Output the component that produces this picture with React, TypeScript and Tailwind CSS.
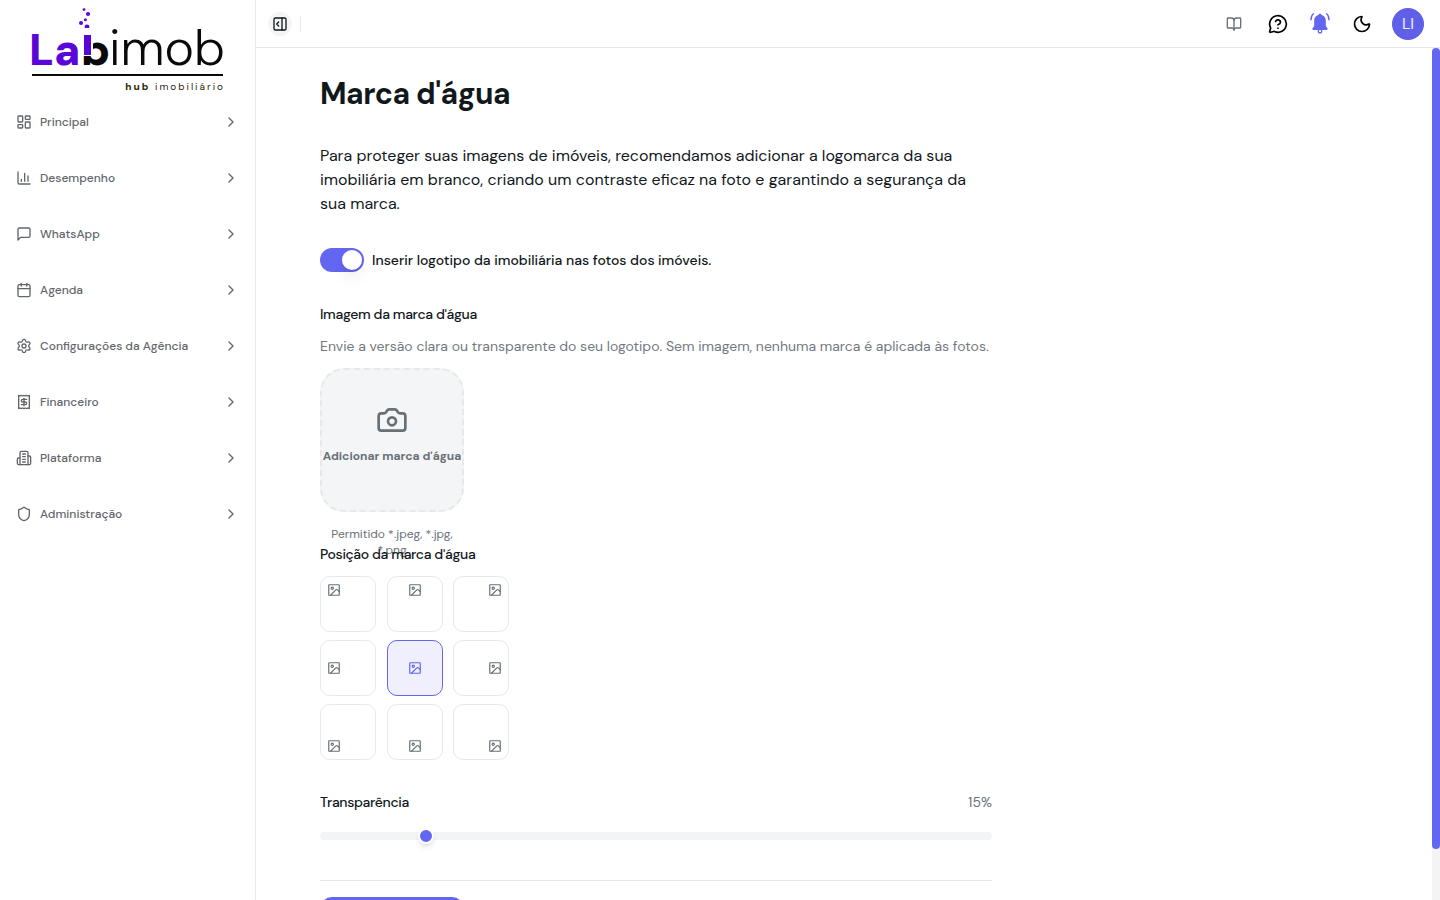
import { useState } from "react";
import {
  BookOpen,
  Calendar,
  Camera,
  ChevronRight,
  LayoutDashboard,
  MessageCircleQuestionMark,
  Moon,
  PanelRightOpen,
  Receipt,
  Settings,
  Shield,
  type LucideIcon,
} from "lucide-react";
import { clsx } from "clsx";

const ChartIcon = () => (
  <svg viewBox="0 0 24 24" className="size-4" fill="none" stroke="currentColor" strokeWidth="2" strokeLinecap="round" strokeLinejoin="round">
    <path d="M3 3v16a2 2 0 0 0 2 2h16M18 17V9M13 17V5M8 17v-3" />
  </svg>
);

const MessageIcon = () => (
  <svg viewBox="0 0 24 24" className="size-4" fill="none" stroke="currentColor" strokeWidth="2" strokeLinecap="round" strokeLinejoin="round">
    <path d="M21 15a2 2 0 0 1-2 2H7l-4 4V5a2 2 0 0 1 2-2h14a2 2 0 0 1 2 2z" />
  </svg>
);

const BuildingIcon = () => (
  <svg viewBox="0 0 24 24" className="size-4" fill="none" stroke="currentColor" strokeWidth="2" strokeLinecap="round" strokeLinejoin="round">
    <path d="M6 22V4a2 2 0 0 1 2-2h8a2 2 0 0 1 2 2v18Z" />
    <path d="M6 12H4a2 2 0 0 0-2 2v6a2 2 0 0 0 2 2h2M18 9h2a2 2 0 0 1 2 2v9a2 2 0 0 1-2 2h-2" />
    <path d="M10 6h4M10 10h4M10 14h4M10 18h4" />
  </svg>
);

const PictureIcon = () => (
  <svg viewBox="0 0 24 24" className="size-3.5" fill="none" stroke="currentColor" strokeWidth="2" strokeLinecap="round" strokeLinejoin="round">
    <rect x="3" y="3" width="18" height="18" rx="1" />
    <circle cx="9" cy="9" r="2" />
    <path d="m21 15-3.1-3.1a2 2 0 0 0-2.8 0L6 21" />
  </svg>
);

const BellIcon = () => (
  <svg viewBox="0 0 24 24" className="size-6" fill="none">
    <path
      fill="currentColor"
      d="M12 1.8c.8 0 1.4.5 1.6 1.3 2.6.7 4.2 2.8 4.2 5.4v4.2c0 1.5.5 2.4 1.5 3.3.7.7.3 2-.8 2h-13c-1.1 0-1.5-1.3-.8-2 1-.9 1.5-1.8 1.5-3.3V8.5c0-2.6 1.6-4.7 4.2-5.4.2-.8.8-1.3 1.6-1.3z"
    />
    <circle cx="12" cy="19.2" r="1.8" fill="white" stroke="currentColor" strokeWidth="1.3" />
    <path d="M5.4 1.8C3.8 3 3 5 3 7.8M18.6 1.8C20.2 3 21 5 21 7.8" stroke="currentColor" strokeWidth="1.4" strokeLinecap="round" />
  </svg>
);

const Logo = () => (
  <svg viewBox="0 0 192 86" className="h-[86px] w-48 overflow-visible" role="img" aria-label="Labimob hub imobiliário">
    <g fill="#5b06d8">
      <circle cx="52" cy="1.6" r="1.4" />
      <circle cx="56" cy="6" r="2.1" />
      <circle cx="53.4" cy="11.8" r="1.5" />
      <circle cx="49" cy="15" r="2" />
      <circle cx="55" cy="19" r="2.4" />
    </g>
    <text x="-3" y="57" fill="#5b06d8" fontSize="44" fontWeight="900" fontFamily="DM Sans, sans-serif">La</text>
    <text x="49" y="57" fill="#0a0a0a" fontSize="44" fontWeight="900" fontFamily="DM Sans, sans-serif">b</text>
    <rect x="50" y="20" width="11" height="28" fill="white" />
    <rect x="52" y="27" width="7" height="20" fill="#5b06d8" />
    <text x="77" y="57" fill="#0a0a0a" fontSize="50" fontWeight="300" fontFamily="DM Sans, sans-serif">imob</text>
    <rect y="66" width="191" height="2" fill="#0a0a0a" />
    <text x="193" y="82" textAnchor="end" fill="#27270f" fontSize="10" letterSpacing="2" fontFamily="DM Sans, sans-serif">
      <tspan fontWeight="800">hub</tspan> imobiliário
    </text>
  </svg>
);

const menu: { label: string; icon: LucideIcon | (() => React.ReactElement) }[] = [
  { label: "Principal", icon: LayoutDashboard },
  { label: "Desempenho", icon: ChartIcon },
  { label: "WhatsApp", icon: MessageIcon },
  { label: "Agenda", icon: Calendar },
  { label: "Configurações da Agência", icon: Settings },
  { label: "Financeiro", icon: Receipt },
  { label: "Plataforma", icon: BuildingIcon },
  { label: "Administração", icon: Shield },
];

const Sidebar = () => (
  <aside className="w-64 shrink-0 border-r border-[#e6e8eb]">
    <div className="px-8 pt-2">
      <Logo />
    </div>
    <nav className="mt-2 flex flex-col gap-4 px-4">
      {menu.map(({ label, icon: Icon }) => (
        <button key={label} type="button" className="flex h-10 w-full items-center gap-2 text-xs font-medium text-[#62666b]">
          <Icon className="size-4" />
          <span>{label}</span>
          <ChevronRight className="ml-auto size-4" />
        </button>
      ))}
    </nav>
  </aside>
);

const Header = () => (
  <header className="flex h-12 shrink-0 items-center border-b border-[#e6e8eb] px-4">
    <button type="button" aria-label="Recolher menu" className="-ml-1 flex size-6 items-center justify-center rounded-full bg-[#f4f5f6]">
      <PanelRightOpen className="size-4" />
    </button>
    <span className="ml-2 h-4 w-px bg-[#e6e8eb]" />
    <div className="ml-auto flex items-center text-black">
      <button type="button" aria-label="Documentação" className="flex w-11 justify-center text-[#687076]">
        <BookOpen className="size-4" />
      </button>
      <button type="button" aria-label="Ajuda" className="flex w-11 justify-center">
        <MessageCircleQuestionMark className="size-5" />
      </button>
      <button type="button" aria-label="Notificações" className="flex w-10 justify-center text-[#6366f1]">
        <BellIcon />
      </button>
      <button type="button" aria-label="Tema escuro" className="flex w-11 justify-center">
        <Moon className="size-5" />
      </button>
      <button type="button" className="ml-2 size-8 rounded-full bg-[#5f5fe8] text-base text-indigo-50">
        LI
      </button>
    </div>
  </header>
);

const positions = [
  { id: "Superior esquerda", align: "items-start justify-start" },
  { id: "Superior centro", align: "items-start justify-center" },
  { id: "Superior direita", align: "items-start justify-end" },
  { id: "Meio esquerda", align: "items-center justify-start" },
  { id: "Centro", align: "items-center justify-center" },
  { id: "Meio direita", align: "items-center justify-end" },
  { id: "Inferior esquerda", align: "items-end justify-start" },
  { id: "Inferior centro", align: "items-end justify-center" },
  { id: "Inferior direita", align: "items-end justify-end" },
];

const WatermarkForm = () => {
  const [enabled, setEnabled] = useState(true);
  const [position, setPosition] = useState("Centro");
  const [opacity, setOpacity] = useState(15);

  return (
    <form className="w-full max-w-2xl" onSubmit={(e) => e.preventDefault()}>
      <h1 className="text-3xl leading-9 font-bold tracking-[-0.5px]">Marca d'água</h1>
      <p className="mt-8 text-base">
        Para proteger suas imagens de imóveis, recomendamos adicionar a logomarca da sua imobiliária em branco, criando um
        contraste eficaz na foto e garantindo a segurança da sua marca.
      </p>

      <div className="mt-8 flex items-center gap-2">
        <input
          id="enabled"
          type="checkbox"
          role="switch"
          checked={enabled}
          onChange={(e) => setEnabled(e.target.checked)}
          className="flex h-6 w-11 shrink-0 appearance-none items-center rounded-full bg-gray-200 p-0.5 before:size-5 before:rounded-full before:bg-white before:shadow-lg checked:justify-end checked:bg-[#6366f1]"
        />
        <label htmlFor="enabled" className="text-sm font-medium">
          Inserir logotipo da imobiliária nas fotos dos imóveis.
        </label>
      </div>

      <label htmlFor="file" className="mt-8 block text-sm font-medium tracking-tight">
        Imagem da marca d'água
      </label>
      <p className="mt-3 text-sm whitespace-nowrap text-[#72797f]">
        Envie a versão clara ou transparente do seu logotipo. Sem imagem, nenhuma marca é aplicada às fotos.
      </p>
      {/* the hint runs past this block when it wraps */}
      <div className="mt-3 h-44 w-36 text-xs text-[#687076]">
        <label
          htmlFor="file"
          className="flex size-36 flex-col items-center justify-center gap-3 rounded-3xl border-2 border-dashed border-[#e6e8eb] bg-[#f3f5f7] pb-3 font-bold whitespace-nowrap"
        >
          <Camera className="size-8" />
          Adicionar marca d'água
        </label>
        <input id="file" type="file" accept=".jpeg,.jpg,.png" className="hidden" />
        <p className="px-2 pt-3.5 text-center">Permitido *.jpeg, *.jpg, *.png</p>
      </div>

      <h2 className="text-sm font-medium tracking-tight">Posição da marca d'água</h2>
      <div className="mt-3 grid w-48 grid-cols-3 gap-2">
        {positions.map(({ id, align }) => (
          <button
            key={id}
            type="button"
            aria-label={id}
            aria-pressed={position === id}
            onClick={() => setPosition(id)}
            className={clsx(
              "flex size-14 rounded-[10px] border p-1.5",
              align,
              position === id ? "border-[#6366f1] bg-[#efeffd] text-[#6366f1]" : "border-[#e6e8eb] text-[#687076]"
            )}
          >
            <PictureIcon />
          </button>
        ))}
      </div>

      <div className="mt-8 flex items-center justify-between text-sm">
        <label htmlFor="opacity" className="font-medium tracking-tight">
          Transparência
        </label>
        <span className="text-[#687076]">{opacity}%</span>
      </div>
      <input
        id="opacity"
        type="range"
        min={0}
        max={100}
        value={opacity}
        onChange={(e) => setOpacity(Number(e.target.value))}
        className="mt-5 block h-2 w-full appearance-none rounded-full bg-[#f3f4f5] [&::-webkit-slider-thumb]:size-4 [&::-webkit-slider-thumb]:appearance-none [&::-webkit-slider-thumb]:rounded-full [&::-webkit-slider-thumb]:border-2 [&::-webkit-slider-thumb]:border-white [&::-webkit-slider-thumb]:bg-[#6366f1] [&::-webkit-slider-thumb]:shadow-md"
      />

      <div className="mt-10 border-t border-[#e6e8eb] pt-4">
        <button type="submit" className="h-10 w-36 rounded-xl bg-[#6366f1] text-sm font-medium text-white">
          Salvar
        </button>
      </div>
    </form>
  );
};

export default function App() {
  return (
    <div className="flex h-screen overflow-hidden bg-white font-['DM_Sans',Inter,sans-serif] text-[#11181c]">
      <Sidebar />
      <div className="flex min-w-0 flex-1 flex-col">
        <Header />
        <div className="flex min-h-0 flex-1">
          <main className="min-w-0 flex-1 overflow-y-auto px-16 py-7 [scrollbar-width:none]">
            <WatermarkForm />
          </main>
          <div className="w-2 shrink-0 bg-[#f4f4f5]">
            <div className="h-[94%] rounded-full bg-[#6366f1]" />
          </div>
        </div>
      </div>
    </div>
  );
}
